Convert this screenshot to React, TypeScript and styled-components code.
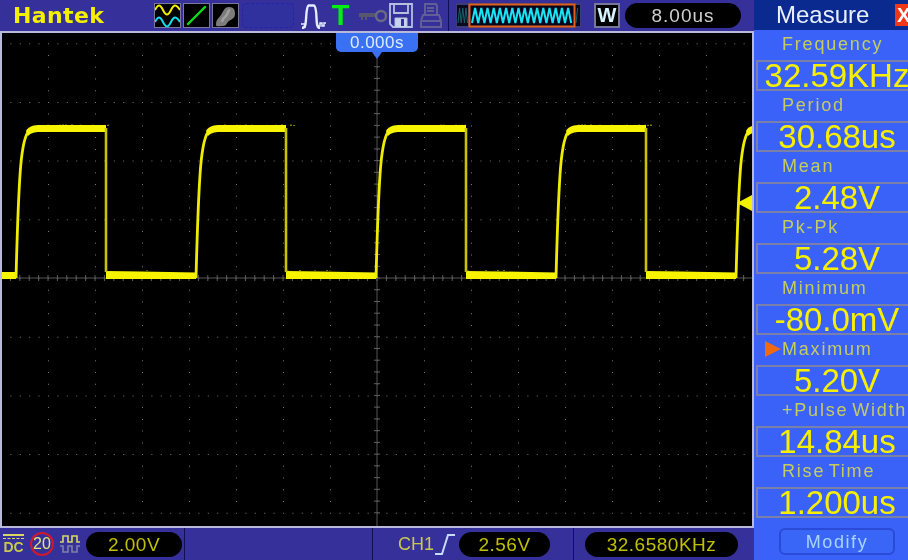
import styled, { createGlobalStyle } from 'styled-components'

const GlobalStyle = createGlobalStyle`
  html, body {
    margin: 0;
    padding: 0;
    background: #33309a;
  }
`

const Root = styled.div`
  display: flex;
  width: 908px;
  height: 560px;
  overflow: hidden;
  font-family: 'Liberation Sans', Arial, sans-serif;
  filter: blur(0.4px);
`

const LeftColumn = styled.div`
  display: flex;
  flex-direction: column;
  width: 754px;
  background: #35309a;
`

const TopBar = styled.div`
  display: flex;
  align-items: center;
  height: 31px;
  padding-left: 13px;
  box-sizing: border-box;
`

const Logo = styled.div`
  width: 141px;
  font-family: 'DejaVu Sans', sans-serif;
  font-weight: bold;
  font-size: 22px;
  color: #f4f000;
  letter-spacing: 0.4px;
`

const ModeIcon = styled.div`
  display: flex;
  width: 27px;
  height: 25px;
  margin-right: 2px;
  box-sizing: border-box;
  border: 1px solid #77779a;
  background: #000;
  svg {
    display: block;
  }
`

const EmptySlot = styled.div`
  width: 52px;
  height: 25px;
  margin: 0 7px 0 1px;
  box-sizing: border-box;
  border: 1px dashed #2026a8;
  border-radius: 4px;
  background: #30309e;
`

const IconSlot = styled.div<{ $w: number; $after?: number }>`
  display: flex;
  justify-content: center;
  width: ${(p) => p.$w}px;
  margin-right: ${(p) => p.$after ?? 0}px;
`

const TriggerT = styled.span`
  font-weight: bold;
  font-size: 29px;
  line-height: 27px;
  color: #00ee10;
`

const BarDivider = styled.div<{ $after: number; $before?: number }>`
  align-self: stretch;
  width: 1px;
  margin: 0 ${(p) => p.$after}px 0 ${(p) => p.$before ?? 0}px;
  background: #101058;
`

const Timeline = styled.div`
  display: flex;
  width: 125px;
  height: 25px;
  margin-right: 13px;
`

const WBox = styled.div`
  width: 26px;
  height: 25px;
  margin-right: 5px;
  box-sizing: border-box;
  border: 2px solid #77779a;
  background: #000;
  color: #d8f4ff;
  font-weight: bold;
  font-size: 20px;
  line-height: 21px;
  text-align: center;
`

const Pill = styled.div<{ $w: number; $color?: string; $spacing?: number }>`
  width: ${(p) => p.$w}px;
  height: 25px;
  border-radius: 13px;
  background: #000;
  color: ${(p) => p.$color ?? '#c0c000'};
  font-size: 19px;
  line-height: 25px;
  letter-spacing: ${(p) => p.$spacing ?? 0.5}px;
  text-align: center;
`

const Scope = styled.div`
  position: relative;
  height: 497px;
  box-sizing: border-box;
  border: 2px solid #b9b9dc;
  background: #000;
  svg {
    display: block;
  }
`

const TimeTag = styled.div`
  position: absolute;
  top: 0;
  left: 334px;
  width: 82px;
  height: 19px;
  border-radius: 0 0 5px 5px;
  background: #3a70f2;
  color: #dcecff;
  font-size: 17px;
  line-height: 20px;
  letter-spacing: 0.5px;
  text-align: center;
  &::after {
    content: '';
    position: absolute;
    top: 19px;
    left: 36px;
    border-left: 5px solid transparent;
    border-right: 5px solid transparent;
    border-top: 7px solid #3a70f2;
  }
`

const LevelMark = styled.div`
  position: absolute;
  top: 162px;
  right: 0;
  border-top: 8px solid transparent;
  border-bottom: 8px solid transparent;
  border-right: 15px solid #f4f000;
`

const BottomBar = styled.div`
  display: flex;
  align-items: center;
  flex: 1;
  padding-left: 3px;
`

const DcIcon = styled.div`
  width: 21px;
  margin-right: 6px;
  color: #c8c850;
  font-size: 14px;
  font-weight: bold;
  line-height: 13px;
  text-align: center;
`

const DcLines = styled.div`
  height: 2px;
  margin-bottom: 2px;
  border-top: 2px solid #d8d860;
  border-bottom: 1px dashed #d8d860;
`

const LimitBadge = styled.div`
  width: 20px;
  height: 20px;
  margin-right: 6px;
  border: 2px solid #d01830;
  border-radius: 50%;
  color: #e4e480;
  font-size: 16px;
  line-height: 20px;
  text-align: center;
`

const ChannelLabel = styled.span`
  width: 37px;
  color: #c8c850;
  font-size: 18px;
`

const Panel = styled.div`
  flex: 1;
  display: flex;
  flex-direction: column;
  overflow: hidden;
  background: #3a62f8;
`

const PanelHeader = styled.div`
  display: flex;
  align-items: center;
  justify-content: space-between;
  flex-shrink: 0;
  height: 30px;
  padding-left: 22px;
  background: #0a2a90;
  color: #e8f0ff;
  font-size: 24px;
`

const CloseButton = styled.div`
  width: 13px;
  height: 22px;
  overflow: hidden;
  background: #f03818;
  color: #fff;
  font-weight: bold;
  font-size: 20px;
  line-height: 22px;
  padding-left: 2px;
  box-sizing: border-box;
`

const MeasureItem = styled.div`
  display: flex;
  flex-direction: column;
  flex-shrink: 0;
  height: 61px;
`

const MeasureLabel = styled.div`
  position: relative;
  height: 30px;
  padding-left: 28px;
  color: #c4cc60;
  font-size: 18px;
  line-height: 28px;
  letter-spacing: 1.8px;
  word-spacing: -3px;
  white-space: nowrap;
`

const ActiveMark = styled.span`
  position: absolute;
  top: 6px;
  left: 11px;
  border-top: 8px solid transparent;
  border-bottom: 8px solid transparent;
  border-left: 16px solid #f26a10;
`

const MeasureValue = styled.div`
  width: 162px;
  height: 31px;
  margin-left: 2px;
  box-sizing: border-box;
  border: 2px solid #7a80a8;
  color: #f8f000;
  font-size: 33px;
  line-height: 28px;
  text-align: center;
  white-space: nowrap;
`

const ModifyButton = styled.div`
  width: 116px;
  height: 27px;
  margin: 10px 0 0 25px;
  flex-shrink: 0;
  box-sizing: border-box;
  border: 2px solid #2a4ad8;
  border-radius: 6px;
  background: #3a66f8;
  color: #a8d4ff;
  font-size: 18px;
  line-height: 24px;
  letter-spacing: 1.6px;
  text-align: center;
`

const measures = [
  { label: 'Frequency', value: '32.59KHz' },
  { label: 'Period', value: '30.68us' },
  { label: 'Mean', value: '2.48V' },
  { label: 'Pk-Pk', value: '5.28V' },
  { label: 'Minimum', value: '-80.0mV' },
  { label: 'Maximum', value: '5.20V', active: true },
  { label: '+Pulse Width', value: '14.84us' },
  { label: 'Rise Time', value: '1.200us' },
]

const CX = 377
const CY = 278
const DIV_X = 47
const DIV_Y = 58.7

function Graticule() {
  const dots: string[] = []
  for (let r = -4; r <= 4; r++) {
    for (let i = -40; i <= 40; i++) {
      dots.push(`M${(CX + (i * DIV_X) / 5).toFixed(1)} ${CY + r * DIV_Y}h1v1h-1z`)
    }
  }
  for (let c = -8; c <= 8; c++) {
    for (let i = -20; i <= 20; i++) {
      dots.push(`M${CX + c * DIV_X} ${(CY + (i * DIV_Y) / 5).toFixed(1)}h1v1h-1z`)
    }
  }
  const ticks: string[] = []
  for (let i = -40; i <= 40; i++) {
    ticks.push(`M${(CX + (i * DIV_X) / 5).toFixed(1)} ${CY - 3}v6`)
  }
  for (let i = -20; i <= 20; i++) {
    ticks.push(`M${CX - 3} ${(CY + (i * DIV_Y) / 5).toFixed(1)}h6`)
  }
  return (
    <g>
      <path d={dots.join('')} fill="#777" />
      <path d={`M2 ${CY}H752M${CX} 33V526`} stroke="#555" strokeWidth="1" />
      <path d={ticks.join('')} stroke="#5e5e5e" strokeWidth="1" />
    </g>
  )
}

function noise(i: number) {
  return Math.abs(Math.sin(i * 12.9898) * 43758.5453) % 1
}

function Waveform() {
  const parts = []
  for (let n = 0; n < 5; n++) {
    const x = 16 + n * 180
    let spikes = ''
    for (let i = 0; i < 80; i += 3) {
      const s = noise(i + n * 7)
      if (s > 0.6) spikes += `M${x + 20 + i} 126v${-s * 1.6}`
      if (s < 0.35 && i < 45) spikes += `M${x + 92 + i} 271v${-s * 3}`
    }
    parts.push(
      <g key={n}>
        <path
          d={`M${x} 278C${x + 1} 240 ${x + 2} 205 ${x + 4} 175C${x + 5.5} 152 ${x + 8} 138 ${x + 12} 132`}
          fill="none"
          stroke="#f0ec00"
          strokeWidth="2.8"
        />
        <path
          d={`M${x + 10} 131C${x + 12} 127 ${x + 16} 125.500 ${x + 22} 125L${x + 90} 125V132L${x + 24} 132C${x + 18} 132 ${x + 15} 133 ${x + 12} 136z`}
          fill="#f8f400"
        />
        <path d={`M${x + 90} 271L${x + 125} 271.500L${x + 180} 272.500V279H${x + 90}z`} fill="#f8f400" />
        <path d={`M${x + 90} 128V272`} stroke="#c8c400" strokeWidth="2.6" />
        <path d={spikes} stroke="#f8f400" strokeWidth="1" />
      </g>,
    )
  }
  return (
    <g>
      <path d="M2 272h14v7H2z" fill="#f8f400" />
      {parts}
    </g>
  )
}

function ChannelsIcon() {
  return (
    <svg width="25" height="23" viewBox="0 0 25 23">
      <path d="M0 6c3-6 5-6 8 0s5 6 8 0 5-6 9 0" fill="none" stroke="#f4f000" strokeWidth="2" />
      <path d="M0 18c3-6 5-6 8 0s5 6 8 0 5-6 9 0" fill="none" stroke="#10e0f0" strokeWidth="2" />
    </svg>
  )
}

function XyIcon() {
  return (
    <svg width="25" height="23" viewBox="0 0 25 23">
      <path d="M4 20L21 3" stroke="#10e010" strokeWidth="2.400" strokeLinecap="round" />
    </svg>
  )
}

function PersistIcon() {
  return (
    <svg width="25" height="23" viewBox="0 0 25 23">
      <path d="M3 21c0-6 3-7 5-10s3-8 8-8 6 3 6 7-3 5-6 7-2 5-6 5-7 1-7-1z" fill="#7c7c7c" />
      <path d="M9 18c0-3 2-4 4-6s2-6 4-6" fill="none" stroke="#a0a0a0" strokeWidth="2.500" />
    </svg>
  )
}

function AcquireIcon() {
  return (
    <svg width="25" height="26" viewBox="0 0 25 26">
      <path
        d="M1 25c2 0 3-1 3.500-4C5.500 15 5 4 7.500 2.500h5.500C16 4 15 15 16 21c.5 3 2 4 3 4"
        fill="none"
        stroke="#e4ecff"
        strokeWidth="2.400"
      />
      <path d="M17 23h2v-3h2v3h2v-3h2" fill="none" stroke="#e4ecff" strokeWidth="1.500" />
      <path d="M0 21h4v4" fill="none" stroke="#e4ecff" strokeWidth="1.500" />
    </svg>
  )
}

function KeyIcon() {
  return (
    <svg width="28" height="16" viewBox="0 0 28 16">
      <path d="M0 5h18v4H8v3H6V9H4v3H2V9H0z" fill="#56566e" />
      <circle cx="22" cy="8" r="5" fill="none" stroke="#6a6a84" strokeWidth="2.500" />
    </svg>
  )
}

function SaveIcon() {
  return (
    <svg width="24" height="25" viewBox="0 0 24 25">
      <path d="M1 1h22v23H4l-3-3z" fill="#35309a" stroke="#b4c0e0" strokeWidth="1.800" />
      <path d="M5 1v9h14V1" fill="none" stroke="#b4c0e0" strokeWidth="1.800" />
      <path d="M6 24v-9h12v9" fill="#c8d4f0" stroke="#b4c0e0" strokeWidth="1" />
      <path d="M12 16h3v7h-3z" fill="#35309a" />
    </svg>
  )
}

function PrintIcon() {
  return (
    <svg width="24" height="25" viewBox="0 0 24 25">
      <g fill="none" stroke="#625f98" strokeWidth="2">
        <path d="M6 12V1h11l1 2v9" />
        <path d="M8 5h7M8 8h7" />
        <path d="M2 18l2-6h16l2 6v6H2z" />
        <path d="M2 18h20" />
      </g>
    </svg>
  )
}

function wavePath(x0: number, x1: number, step: number) {
  let d = `M${x0} 20`
  let up = true
  for (let x = x0 + step; x <= x1; x += step) {
    d += `L${x.toFixed(1)} ${up ? 5 : 20}`
    up = !up
  }
  return d
}

function TimelineStrip() {
  return (
    <svg width="125" height="25" viewBox="0 0 125 25">
      <rect width="125" height="25" fill="#3c3c78" />
      <rect x="1" y="2" width="11" height="21" fill="#0a0a1e" />
      <rect x="106" y="2" width="18" height="21" fill="#0a0a1e" />
      <path d={wavePath(2, 12, 1.600)} fill="none" stroke="#14606c" strokeWidth="1" />
      <path d={wavePath(120, 123, 1.600)} fill="none" stroke="#14606c" strokeWidth="1" />
      <rect x="13.500" y="1.500" width="105" height="22" fill="#06061e" stroke="#e0601c" strokeWidth="2" />
      <path d={wavePath(16, 116, 3.100)} fill="none" stroke="#18e4f4" strokeWidth="2" />
    </svg>
  )
}

function CouplingWave() {
  return (
    <svg width="20" height="20" viewBox="0 0 20 20">
      <path d="M0 8h3V2h5v6h4V2h5v6h3" fill="none" stroke="#d8d860" strokeWidth="1.600" />
      <path d="M0 12h3v6h5v-6h4v6h5v-6h3" fill="none" stroke="#8080a8" strokeWidth="1.600" />
    </svg>
  )
}

function EdgeIcon() {
  return (
    <svg width="20" height="24" viewBox="0 0 20 24">
      <path d="M0 22h7L13 3h7" fill="none" stroke="#c4dcff" strokeWidth="2" />
    </svg>
  )
}

function App() {
  return (
    <Root>
      <GlobalStyle />
      <LeftColumn>
        <TopBar>
          <Logo>Hantek</Logo>
          <ModeIcon>
            <ChannelsIcon />
          </ModeIcon>
          <ModeIcon>
            <XyIcon />
          </ModeIcon>
          <ModeIcon>
            <PersistIcon />
          </ModeIcon>
          <EmptySlot />
          <IconSlot $w={25} $after={6}>
            <AcquireIcon />
          </IconSlot>
          <IconSlot $w={17} $after={10}>
            <TriggerT>T</TriggerT>
          </IconSlot>
          <IconSlot $w={28} $after={2}>
            <KeyIcon />
          </IconSlot>
          <IconSlot $w={24} $after={6}>
            <SaveIcon />
          </IconSlot>
          <IconSlot $w={24}>
            <PrintIcon />
          </IconSlot>
          <BarDivider $before={5} $after={7} />
          <Timeline>
            <TimelineStrip />
          </Timeline>
          <WBox>W</WBox>
          <Pill $w={116} $color="#cfcfcf" $spacing={1}>
            8.00us
          </Pill>
        </TopBar>
        <Scope>
          <svg width="750" height="493" viewBox="2 33 750 493">
            <Graticule />
            <Waveform />
          </svg>
          <TimeTag>0.000s</TimeTag>
          <LevelMark />
        </Scope>
        <BottomBar>
          <DcIcon>
            <DcLines />
            DC
          </DcIcon>
          <LimitBadge>20</LimitBadge>
          <IconSlot $w={20} $after={6}>
            <CouplingWave />
          </IconSlot>
          <Pill $w={96}>2.00V</Pill>
          <BarDivider $before={2} $after={187} />
          <BarDivider $after={25} />
          <ChannelLabel>CH1</ChannelLabel>
          <EdgeIcon />
          <IconSlot $w={4} />
          <Pill $w={91}>2.56V</Pill>
          <BarDivider $before={23} $after={11} />
          <Pill $w={153}>32.6580KHz</Pill>
        </BottomBar>
      </LeftColumn>
      <Panel>
        <PanelHeader>
          Measure
          <CloseButton>X</CloseButton>
        </PanelHeader>
        {measures.map((m) => (
          <MeasureItem key={m.label}>
            <MeasureLabel>
              {m.active && <ActiveMark />}
              {m.label}
            </MeasureLabel>
            <MeasureValue>{m.value}</MeasureValue>
          </MeasureItem>
        ))}
        <ModifyButton>Modify</ModifyButton>
      </Panel>
    </Root>
  )
}

export default App
